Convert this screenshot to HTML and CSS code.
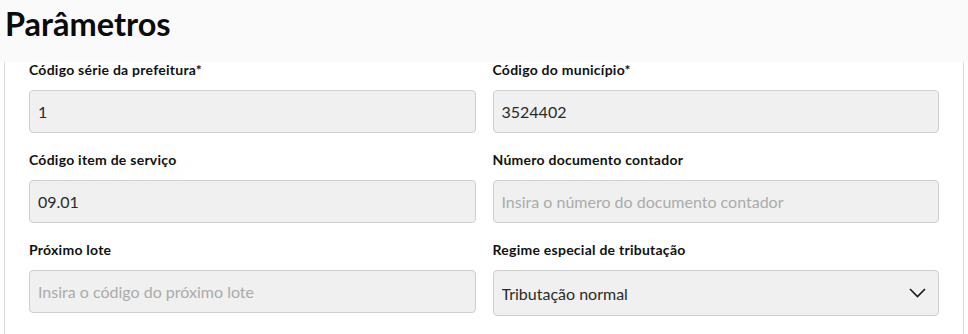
FILE: index.html
```html
<!DOCTYPE html>
<html lang="pt-BR">
<head>
    <meta charset="UTF-8">
    <meta name="viewport" content="width=device-width, initial-scale=1.0">
    <title>Parâmetros</title>
    <link rel="stylesheet" href="styles.css">
</head>
<body>
    <header class="page-header">
        <h1>Parâmetros</h1>
    </header>
    <form class="card">
        <div class="grid">
            <div class="field">
                <label for="serie">Código série da prefeitura*</label>
                <input type="text" id="serie" value="1">
            </div>
            <div class="field">
                <label for="municipio">Código do município*</label>
                <input type="text" id="municipio" value="3524402">
            </div>
            <div class="field">
                <label for="item">Código item de serviço</label>
                <input type="text" id="item" value="09.01">
            </div>
            <div class="field">
                <label for="documento">Número documento contador</label>
                <input type="text" id="documento" placeholder="Insira o número do documento contador">
            </div>
            <div class="field">
                <label for="lote">Próximo lote</label>
                <input type="text" id="lote" placeholder="Insira o código do próximo lote">
            </div>
            <div class="field">
                <label for="regime">Regime especial de tributação</label>
                <div class="select">
                    <select id="regime">
                        <option>Tributação normal</option>
                    </select>
                    <svg class="chevron" width="17" height="10" viewBox="0 0 17 10">
                        <path d="M1 1 L8.5 8.5 L16 1" fill="none" stroke="#1a1a1a" stroke-width="1.6"/>
                    </svg>
                </div>
            </div>
        </div>
    </form>
</body>
</html>
```

FILE: styles.css
```css
body {
    font-family: Lato, "Open Sans", sans-serif;
    background-color: #fff;
    color: #111;
    margin: 0;
}
.page-header {
    background-color: #fafafa;
    height: 62px;
    padding: 0 5px;
    box-sizing: border-box;
}
.page-header h1 {
    margin: 0;
    padding-top: 4px;
    font-size: 32.5px;
    line-height: 40px;
    font-weight: 700;
    color: #0b0b0b;
}
.card {
    margin: 0 4px;
    border-left: 1px solid #ddd;
    border-right: 1px solid #ddd;
    padding: 0 24px 0 24px;
    min-height: 272px;
}
.grid {
    display: grid;
    grid-template-columns: 1fr 1fr;
    column-gap: 17px;
    row-gap: 19px;
}
.field label {
    display: block;
    font-size: 14px;
    line-height: 16px;
    font-weight: 700;
    letter-spacing: 0.25px;
    color: #111;
    margin-bottom: 12px;
}
.field input,
.field select {
    width: 100%;
    height: 43px;
    padding: 0 8px;
    font-family: inherit;
    font-size: 16px;
    color: #2a2a2a;
    background-color: #f0f0f0;
    border: 1px solid #cfcfcf;
    border-radius: 4px;
    box-sizing: border-box;
    outline: none;
}
.field input::placeholder {
    color: #ababab;
}
.select {
    position: relative;
}
.field select {
    height: 46px;
    appearance: none;
    -webkit-appearance: none;
}
.chevron {
    position: absolute;
    right: 13px;
    top: 18px;
    pointer-events: none;
}
```
